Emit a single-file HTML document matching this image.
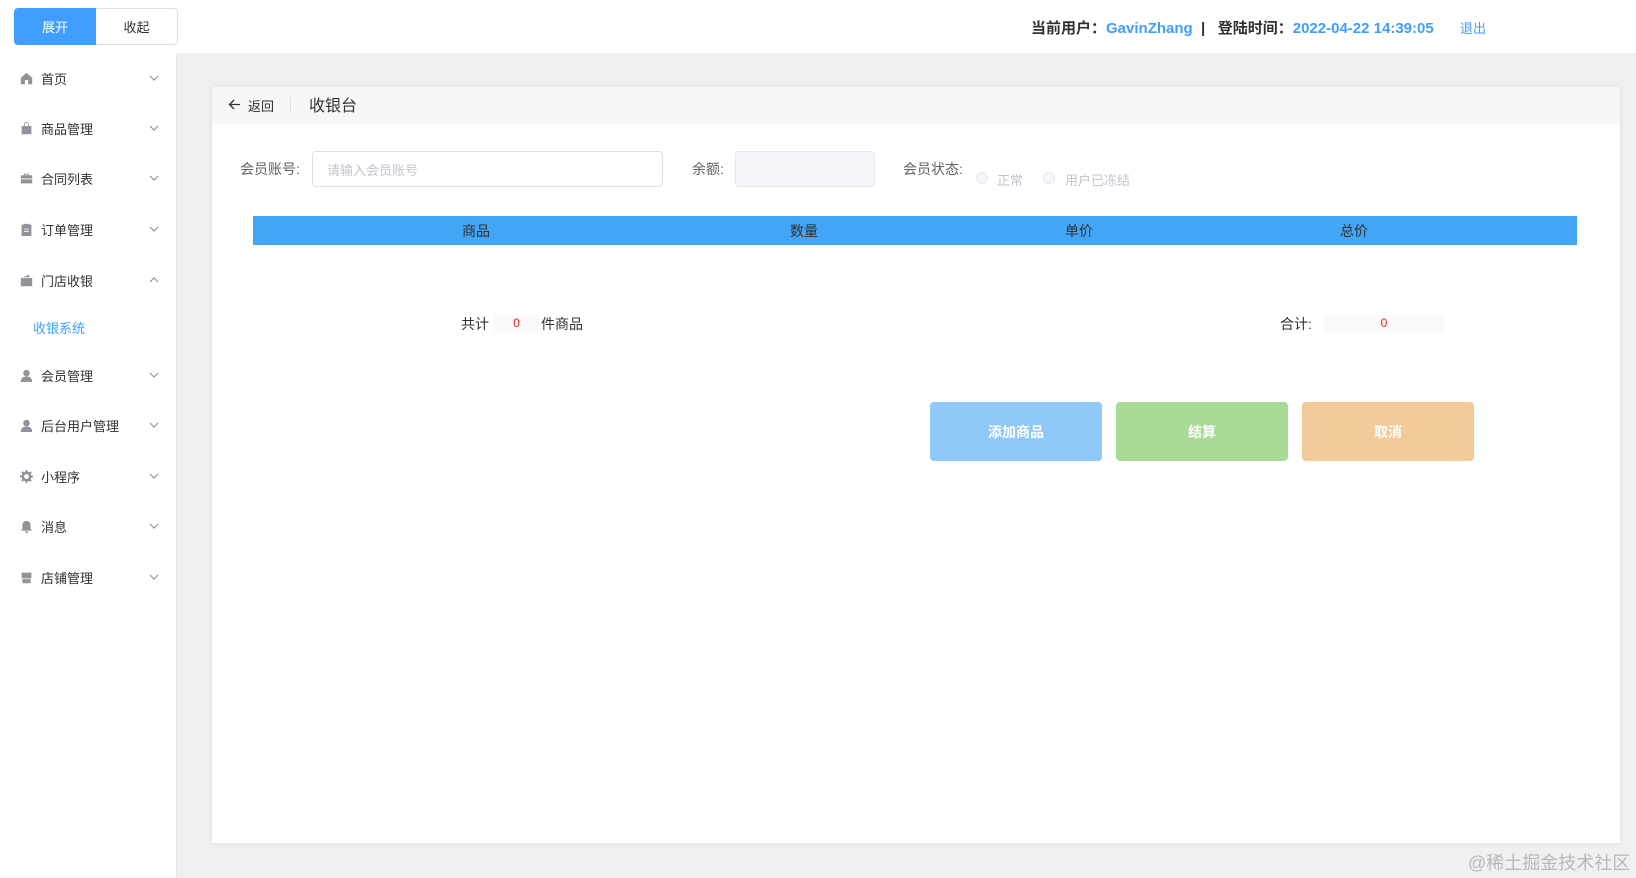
<!DOCTYPE html>
<html><head><meta charset="utf-8">
<style>
*{margin:0;padding:0;box-sizing:border-box}
body{width:1636px;height:878px;background:#f0f0f0;font-family:"Liberation Sans","Noto Sans CJK SC",sans-serif;font-size:14px;color:#303133;position:relative;overflow:hidden}
.abs{position:absolute}
.top{left:0;top:0;width:1636px;height:53px;background:#fff}
.side{left:0;top:53px;width:177px;height:825px;background:#fff;border-right:1px solid #e6e6e6}
.tb{top:8px;height:37px;font-size:13px;display:flex;align-items:center;justify-content:center}
.mi{left:0;width:177px;height:20px;display:flex;align-items:center;font-size:13px;color:#303133}
.mi svg.ic{position:absolute;left:20px;width:13px;height:13px;fill:#909399}
.mi span{position:absolute;left:41px}
.mi svg.ch{position:absolute;left:149px;width:10px;height:10px;stroke:#909399;fill:none;stroke-width:1.2}
.card{left:212px;top:87px;width:1408px;height:756px;background:#fff;box-shadow:0 0 6px rgba(0,0,0,.08)}
.btn{top:402px;height:59px;width:172px;border-radius:4px;color:#fff;font-weight:bold;font-size:14px;display:flex;align-items:center;justify-content:center}
</style></head><body>
<div class="abs top"></div>
<div class="abs tb" style="left:14px;width:82px;background:#409eff;color:#fff;border-radius:4px 0 0 4px">展开</div>
<div class="abs tb" style="left:96px;width:82px;border:1px solid #dcdfe6;border-left:none;border-radius:0 4px 4px 0;color:#303133">收起</div>
<div class="abs" style="left:1031px;top:17px;font-size:15px;font-weight:bold;white-space:nowrap;color:#303133">当前用户：<span style="color:#409eff">GavinZhang</span>&nbsp;&nbsp;|&nbsp;&nbsp; 登陆时间：<span style="color:#409eff">2022-04-22 14:39:05</span></div>
<div class="abs" style="left:1460px;top:18px;font-size:13px;color:#409eff">退出</div>
<div class="abs side"></div>

<div class="abs mi" style="top:68px"><svg class="ic" viewBox="0 0 16 16"><path d="M8 1L1 7v8h5v-5h4v5h5V7z"/></svg><span>首页</span><svg class="ch" viewBox="0 0 10 10"><path d="M1 3l4 4 4-4"/></svg></div>
<div class="abs mi" style="top:118px"><svg class="ic" viewBox="0 0 16 16"><path d="M5 5V3a3 3 0 016 0v2h3v10H2V5zm1 0h4V3a2 2 0 00-4 0z"/></svg><span>商品管理</span><svg class="ch" viewBox="0 0 10 10"><path d="M1 3l4 4 4-4"/></svg></div>
<div class="abs mi" style="top:168px"><svg class="ic" viewBox="0 0 16 16"><path d="M5 2h6v2h4v4H1V4h4zm1 1v1h4V3zM1 9h14v5H1z"/></svg><span>合同列表</span><svg class="ch" viewBox="0 0 10 10"><path d="M1 3l4 4 4-4"/></svg></div>
<div class="abs mi" style="top:219px"><svg class="ic" viewBox="0 0 16 16"><path d="M2 2h3V1h6v1h3v14H2zm3 5v1h6V7zm0 3v1h6v-1z"/></svg><span>订单管理</span><svg class="ch" viewBox="0 0 10 10"><path d="M1 3l4 4 4-4"/></svg></div>
<div class="abs mi" style="top:270px"><svg class="ic" viewBox="0 0 16 16"><path d="M1 5h14v10H1zM3 4l8-3 1 3zM10 9h5v2h-5z"/></svg><span>门店收银</span><svg class="ch" viewBox="0 0 10 10"><path d="M1 7l4-4 4 4"/></svg></div>
<div class="abs" style="left:33px;top:318px;font-size:13px;color:#409eff">收银系统</div>
<div class="abs mi" style="top:365px"><svg class="ic" viewBox="0 0 16 16"><circle cx="8" cy="5" r="4"/><path d="M1 16c0-5 3-7 7-7s7 2 7 7z"/></svg><span>会员管理</span><svg class="ch" viewBox="0 0 10 10"><path d="M1 3l4 4 4-4"/></svg></div>
<div class="abs mi" style="top:415px"><svg class="ic" viewBox="0 0 16 16"><circle cx="8" cy="5" r="4"/><path d="M1 16c0-5 3-7 7-7s7 2 7 7z"/></svg><span>后台用户管理</span><svg class="ch" viewBox="0 0 10 10"><path d="M1 3l4 4 4-4"/></svg></div>
<div class="abs mi" style="top:466px"><svg class="ic" viewBox="0 0 16 16"><path d="M7 0h2l.5 2.2 1.6.7 2-1.2 1.4 1.4-1.2 2 .7 1.6L16 7v2l-2.2.5-.7 1.600 1.2 2-1.4 1.4-2-1.2-1.6.7L9 16H7l-.5-2.2-1.6-.7-2 1.2-1.4-1.4 1.2-2-.7-1.6L0 9V7l2.2-.5.7-1.6-1.2-2 1.4-1.4 2 1.2 1.6-.7zM8 5a3 3 0 100 6 3 3 0 000-6z"/></svg><span>小程序</span><svg class="ch" viewBox="0 0 10 10"><path d="M1 3l4 4 4-4"/></svg></div>
<div class="abs mi" style="top:516px"><svg class="ic" viewBox="0 0 16 16"><path d="M8 1a5 5 0 00-5 5v5l-2 2h14l-2-2V6a5 5 0 00-5-5zM6 14h4a2 2 0 01-4 0z"/></svg><span>消息</span><svg class="ch" viewBox="0 0 10 10"><path d="M1 3l4 4 4-4"/></svg></div>
<div class="abs mi" style="top:567px"><svg class="ic" viewBox="0 0 16 16"><path d="M2 2h12v7H2zM3 10h10v5H3z"/></svg><span>店铺管理</span><svg class="ch" viewBox="0 0 10 10"><path d="M1 3l4 4 4-4"/></svg></div>

<div class="abs card"></div>
<div class="abs" style="left:212px;top:87px;width:1408px;height:37px;background:#f7f7f7"></div>
<svg class="abs" style="left:228px;top:98px" width="13" height="13" viewBox="0 0 13 13"><path d="M12 6.5H1.5M6 2L1.5 6.5 6 11" stroke="#303133" stroke-width="1.3" fill="none"/></svg>
<div class="abs" style="left:248px;top:96px;font-size:13px">返回</div>
<div class="abs" style="left:290px;top:97px;width:1px;height:15px;background:#dcdfe6"></div>
<div class="abs" style="left:309px;top:92px;font-size:16px">收银台</div>

<div class="abs" style="left:240px;top:159px;color:#606266">会员账号:</div>
<div class="abs" style="left:312px;top:151px;width:351px;height:36px;border:1px solid #dcdfe6;border-radius:4px;color:#c0c4cc;font-size:13px;padding:8px 14px">请输入会员账号</div>
<div class="abs" style="left:692px;top:159px;color:#606266">余额:</div>
<div class="abs" style="left:735px;top:151px;width:140px;height:36px;border:1px solid #e4e7ed;border-radius:4px;background:#f5f7fa"></div>
<div class="abs" style="left:903px;top:159px;color:#606266">会员状态:</div>
<div class="abs" style="left:976px;top:172px;width:12px;height:12px;border-radius:50%;border:1px solid #e4e7ed;background:#f5f7fa"></div>
<div class="abs" style="left:997px;top:170px;font-size:13px;color:#c0c4cc">正常</div>
<div class="abs" style="left:1043px;top:172px;width:12px;height:12px;border-radius:50%;border:1px solid #e4e7ed;background:#f5f7fa"></div>
<div class="abs" style="left:1065px;top:170px;font-size:13px;color:#c0c4cc">用户已冻结</div>

<div class="abs" style="left:253px;top:216px;width:1324px;height:29px;background:#42a5f5"></div>
<div class="abs" style="left:462px;top:221px">商品</div>
<div class="abs" style="left:790px;top:221px">数量</div>
<div class="abs" style="left:1065px;top:221px">单价</div>
<div class="abs" style="left:1340px;top:221px">总价</div>

<div class="abs" style="left:461px;top:314px">共计</div>
<div class="abs" style="left:494px;top:315px;width:45px;height:17px;background:#fafafa;color:#e02020;font-size:12px;text-align:center;line-height:17px">0</div>
<div class="abs" style="left:541px;top:314px">件商品</div>
<div class="abs" style="left:1280px;top:314px">合计:</div>
<div class="abs" style="left:1324px;top:315px;width:120px;height:17px;background:#fafafa;color:#e02020;font-size:12px;text-align:center;line-height:17px">0</div>

<div class="abs btn" style="left:930px;background:#90c8fa">添加商品</div>
<div class="abs btn" style="left:1116px;background:#a8db98">结算</div>
<div class="abs btn" style="left:1302px;background:#f3ca9a">取消</div>

<div class="abs" style="left:1468px;top:849px;font-size:18px;color:#b8b8b8">@稀土掘金技术社区</div>
</body></html>
